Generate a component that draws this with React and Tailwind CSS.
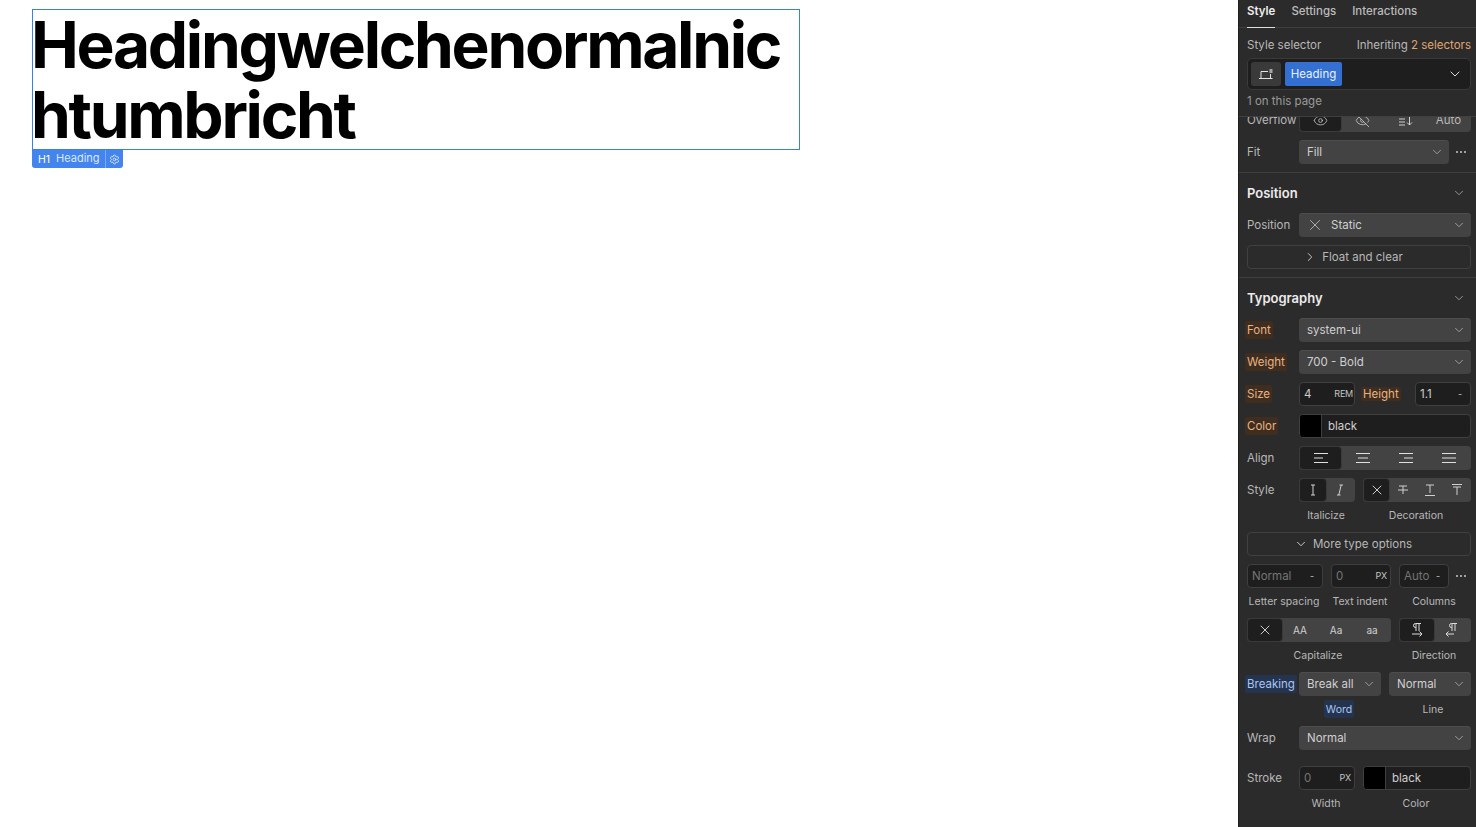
import React from 'react';
import { ChevronDown, ChevronRight, X, Eye, EyeOff, Settings } from 'lucide-react';

const Chevron = () => <ChevronDown size={14} strokeWidth={1.25} className="text-[#bdbdbd] shrink-0" />;

const Dots = () => (
  <svg width="12" height="12" viewBox="0 0 12 12" className="text-[#c8c8c8] shrink-0" fill="currentColor">
    <circle cx="2" cy="6" r="1" /><circle cx="6" cy="6" r="1" /><circle cx="10" cy="6" r="1" />
  </svg>
);

const Lines = ({ rows }) => (
  <svg width="16" height="12" viewBox="0 0 16 12" stroke="#e0e0e0" strokeWidth="1" fill="none">
    {rows.map(([a, b], i) => <path key={i} d={`M${a} ${1.5 + i * 4.5}H${b}`} />)}
  </svg>
);

const Label = ({ children, tone }) => {
  if (tone === 'orange') {
    return <span className="-ml-[2px] px-[2px] h-[18px] leading-[18px] rounded-[2px] bg-[#3f2e20] text-[#e8b383] w-fit">{children}</span>;
  }
  if (tone === 'blue') {
    return <span className="-ml-[2px] px-[2px] h-[18px] leading-[18px] rounded-[2px] bg-[#24344e] text-[#a8c6f5] w-fit">{children}</span>;
  }
  return <span className="text-[#b8b8b8]">{children}</span>;
};

const Select = ({ value, className = '', icon }) => (
  <div className={`h-[24px] rounded-[4px] bg-[#434343] shadow-[inset_0_1px_0_#4d4d4d] flex items-center justify-between pl-2 pr-[5px] text-[#d0d0d0] ${className}`}>
    <span className="flex items-center">{icon}{value}</span>
    <Chevron />
  </div>
);

const Field = ({ value, unit, className = '', dim }) => (
  <div className={`h-[24px] rounded-[4px] bg-[#1e1e1e] border border-[#3f3f3f] flex items-center justify-between pl-1 ${className}`}>
    <span className={dim ? 'text-[#757575]' : 'text-[#d0d0d0]'}>{value}</span>
    <span className="text-[9px] text-[#c4c4c4] tracking-tight">{unit}</span>
  </div>
);

const Swatch = ({ className = '' }) => (
  <div className={`h-[24px] rounded-[4px] bg-[#1e1e1e] border border-[#3f3f3f] flex items-center overflow-hidden text-[#d0d0d0] ${className}`}>
    <span className="w-[22px] h-full bg-black border-r border-[#3f3f3f]" />
    <span className="ml-[6px]">black</span>
  </div>
);

const Seg = ({ items, className = '' }) => (
  <div className={`h-[24px] rounded-[4px] bg-[#434343] flex items-stretch overflow-hidden ${className}`}>
    {items.map((item, i) => (
      <span
        key={i}
        className={`flex-1 flex items-center justify-center text-[10px] ${i === 0 ? 'bg-[#1e1e1e] rounded-[4px] border border-[#3a3a3a]' : 'pr-[2px]'} text-[#d0d0d0]`}
      >
        {item}
      </span>
    ))}
  </div>
);

const Row = ({ label, tone, children, className = '' }) => (
  <div className={`flex items-center h-[24px] ${className}`}>
    <div className="w-[52px] shrink-0 flex"><Label tone={tone}>{label}</Label></div>
    <div className="flex-1 flex items-center min-w-0">{children}</div>
  </div>
);

const Caption = ({ children, className = '' }) => (
  <span className={`text-center text-[10.5px] leading-[16px] pr-[2px] text-[#b8b8b8] ${className}`}>{children}</span>
);

const Outline = ({ children }) => (
  <div className="h-[24px] rounded-[4px] border border-[#404040] flex items-center justify-center gap-[5px] pr-[12px] text-[#b8b8b8]">
    {children}
  </div>
);

const SectionTitle = ({ children }) => (
  <div className="flex items-center justify-between h-[20px] pr-[5px]">
    <span className="text-[13px] leading-[20px] font-semibold text-[#ececec]">{children}</span>
    <Chevron />
  </div>
);

const XIcon = () => <X size={16} strokeWidth={1.25} className="text-[#eeeeee]" />;

const StrikeT = ({ d }) => (
  <svg width="14" height="14" viewBox="0 0 14 14" stroke="#d0d0d0" strokeWidth="1" fill="none"><path d={d} /></svg>
);

const Para = ({ d }) => (
  <svg width="16" height="16" viewBox="0 0 16 16" stroke="#dcdcdc" strokeWidth="1" fill="none"><path d={d} /></svg>
);

export default function App() {
  return (
    <div className="flex h-[827px] overflow-hidden bg-white" style={{ fontFamily: 'Inter, sans-serif' }}>
      <main className="flex-1 min-w-0 pt-[9px] pl-[32px]">
        <div className="relative w-[768px] h-[141px] border border-[#3b7de9]">
          <h1 className="text-[64px] leading-[70.4px] font-bold text-black break-all tracking-[-2.3px] -ml-[2px]">
            Headingwelchenormalnichtumbricht
          </h1>
          <div className="absolute -left-px top-[140px] flex items-center h-[18px] bg-[#4384ee] rounded-b-[3px] text-white text-[11px]">
            <span className="pl-[6px] pr-[6px] pt-[2px] text-[10.5px]">H1</span>
            <span className="pr-[5px] pb-[2px] text-[#dce8fc]">Heading</span>
            <span className="h-full border-l border-[#7fabf3] px-[3px] flex items-center">
              <Settings size={11} strokeWidth={1.5} />
            </span>
          </div>
        </div>
      </main>

      <aside className="w-[238px] shrink-0 bg-[#2b2b2b] border-l border-[#1f1f1f] text-[11.5px] leading-[16px] flex flex-col">
        <div className="h-[28px] border-b border-[#3f3f3f] flex items-start gap-4 px-2 text-[#bcbcbc]">
          <span className="h-[28px] pt-[3px] border-b border-[#dddddd] font-semibold text-[#eeeeee]">Style</span>
          <span className="pt-[3px] font-medium">Settings</span>
          <span className="pt-[3px] font-medium">Interactions</span>
        </div>

        <div className="h-[89px] border-b border-[#3f3f3f] pl-2 pr-[5px] pt-[10px]">
          <div className="flex justify-between text-[#b8b8b8] h-[14px] leading-[14px]">
            <span>Style selector</span>
            <span>Inheriting <span className="text-[#e0a56f]">2 selectors</span></span>
          </div>
          <div className="mt-[6px] h-[32px] rounded-[5px] bg-[#1e1e1e] border border-[#3a3a3a] flex items-center pl-[3px] pr-[7px] gap-1">
            <span className="w-[30px] h-[24px] rounded-[3px] bg-[#3a3a3a] flex items-center justify-center">
              <svg width="16" height="12" viewBox="0 0 16 12" stroke="#e4e4e4" strokeWidth="1" fill="none">
                <path d="M1 10.5H14.5M3 10.5V3.5H10M12.5 6V10.5" />
                <path d="M13 1V5M11.2 2H14.8M11.2 4H14.8" strokeWidth="0.8" />
              </svg>
            </span>
            <span className="h-[24px] w-[57px] justify-center rounded-[2px] bg-[#3370d1] text-[#e8f0ff] flex items-center">Heading</span>
            <ChevronDown size={16} strokeWidth={1.5} className="ml-auto text-[#dddddd]" />
          </div>
          <div className="mt-[3px] text-[#9a9a9a]">1 on this page</div>
        </div>

        <div className="flex-1 min-h-0 flex flex-col pl-2 pr-[5px]">
          <div className="h-[15px] overflow-hidden flex items-end shrink-0">
            <div className="flex items-center h-[24px] w-full shrink-0">
              <span className="w-[52px] shrink-0 text-[#b8b8b8]">Overflow</span>
              <Seg
                className="flex-1"
                items={[
                  <Eye size={15} strokeWidth={1.25} />,
                  <EyeOff size={15} strokeWidth={1.25} />,
                  <svg width="16" height="12" viewBox="0 0 16 12" stroke="#d0d0d0" fill="none">
                    <path d="M1 2H7M1 5H7M1 8H7M1 11H7" />
                    <path d="M11.5 1V11M9 8.5L11.5 11L14 8.5" />
                  </svg>,
                  <span className="text-[11.5px] text-[#b8b8b8]">Auto</span>,
                ]}
              />
            </div>
          </div>

          <Row label="Fit" className="mt-[8px]">
            <Select value="Fill" className="flex-1" />
            <span className="ml-[6px] mr-[4px]"><Dots /></span>
          </Row>

          <div className="-ml-2 -mr-[5px] mt-2 border-t border-[#3f3f3f]" />

          <div className="mt-[10px]"><SectionTitle>Position</SectionTitle></div>
          <Row label="Position" className="mt-[10px]">
            <Select
              value="Static"
              className="flex-1"
              icon={<X size={18} strokeWidth={1} className="-ml-[1px] mr-[7px] text-[#cccccc]" />}
            />
          </Row>
          <div className="mt-2">
            <Outline><ChevronRight size={14} strokeWidth={1.5} className="text-[#dddddd]" />Float and clear</Outline>
          </div>

          <div className="-ml-2 -mr-[5px] mt-2 border-t border-[#3f3f3f]" />

          <div className="mt-[10px]"><SectionTitle>Typography</SectionTitle></div>
          <Row label="Font" tone="orange" className="mt-[10px]">
            <Select value="system-ui" className="flex-1" />
          </Row>
          <Row label="Weight" tone="orange" className="mt-2">
            <Select value="700 - Bold" className="flex-1" />
          </Row>
          <Row label="Size" tone="orange" className="mt-2">
            <Field value="4" unit="REM" className="w-[56px] pr-[1px]" />
            <span className="ml-2 w-[52px]"><Label tone="orange">Height</Label></span>
            <Field value="1.1" unit="-" className="flex-1 pr-2" />
          </Row>
          <Row label="Color" tone="orange" className="mt-2">
            <Swatch className="flex-1" />
          </Row>
          <Row label="Align" className="mt-2">
            <Seg
              className="flex-1"
              items={[
                <Lines rows={[[1, 15], [1, 10], [1, 15]]} />,
                <Lines rows={[[1, 15], [3, 13], [1, 15]]} />,
                <Lines rows={[[1, 15], [6, 15], [1, 15]]} />,
                <Lines rows={[[1, 15], [1, 15], [1, 15]]} />,
              ]}
            />
          </Row>
          <Row label="Style" className="mt-2">
            <Seg
              className="w-[56px]"
              items={[
                <StrikeT d="M5 2H9M5 12H9M7 2V12" />,
                <StrikeT d="M6.5 2H10M4 12H7.5M8.2 2L5.8 12" />,
              ]}
            />
            <Seg
              className="flex-1 ml-2"
              items={[
                <XIcon />,
                <StrikeT d="M3 3H11M7 3V11M2 7H12" />,
                <StrikeT d="M3 2H11M7 2V10M2 12.5H12" />,
                <StrikeT d="M2 1.5H12M3 4H11M7 4V12" />,
              ]}
            />
          </Row>
          <div className="flex h-[14px] mt-[6px]">
            <span className="w-[52px] shrink-0" />
            <Caption className="w-[56px]">Italicize</Caption>
            <Caption className="flex-1 ml-2">Decoration</Caption>
          </div>

          <div className="mt-[10px]">
            <Outline><ChevronDown size={14} strokeWidth={1.5} className="text-[#dddddd]" />More type options</Outline>
          </div>

          <div className="flex items-center gap-2 mt-2">
            <Field value="Normal" unit="-" dim className="w-[76px] pr-2" />
            <Field value="0" unit="PX" dim className="w-[60px] pr-[3px]" />
            <Field value="Auto" unit="-" dim className="w-[50px] pr-2" />
            <span className="-ml-[2px]"><Dots /></span>
          </div>
          <div className="flex gap-2 h-[14px] mt-[6px] pr-[22px] whitespace-nowrap">
            <Caption className="w-[76px]">Letter spacing</Caption>
            <Caption className="w-[60px]">Text indent</Caption>
            <Caption className="w-[50px] translate-x-[11px]">Columns</Caption>
          </div>

          <div className="flex gap-2 mt-[10px]">
            <Seg
              className="w-[144px]"
              items={[<XIcon />, 'AA', 'Aa', 'aa']}
            />
            <Seg
              className="flex-1"
              items={[
                <Para d="M7 9V1.5M10 9V1.5M12 1.5H6.5A2 2 0 0 0 6.5 5.5H7M3 12H13M10.5 9.5L13 12L10.5 14.5" />,
                <Para d="M8 9V1.5M11 9V1.5M13 1.5H7.5A2 2 0 0 0 7.5 5.5H8M2 12H10M4.5 9.5L2 12L4.5 14.5" />,
              ]}
            />
          </div>
          <div className="flex gap-2 h-[14px] mt-[6px]">
            <Caption className="w-[144px]">Capitalize</Caption>
            <Caption className="flex-1">Direction</Caption>
          </div>

          <Row label="Breaking" tone="blue" className="mt-[10px]">
            <Select value="Break all" className="w-[82px]" />
            <Select value="Normal" className="flex-1 ml-2" />
          </Row>
          <div className="flex h-[18px] mt-[4px]">
            <span className="w-[52px] shrink-0" />
            <div className="w-[80px] flex justify-center"><span className="text-[10.5px] leading-[16px] pt-[2px] px-[2px] rounded-[2px] bg-[#24344e] text-[#a8c6f5]">Word</span></div>
            <span className="flex-1 ml-[10px] pl-[6px] pt-[2px] text-center text-[10.5px] leading-[16px] text-[#b8b8b8]">Line</span>
          </div>

          <Row label="Wrap" className="mt-[8px]">
            <Select value="Normal" className="flex-1" />
          </Row>

          <Row label="Stroke" className="mt-[16px]">
            <Field value="0" unit="PX" dim className="w-[56px] pr-[3px]" />
            <Swatch className="flex-1 ml-2" />
          </Row>
          <div className="flex h-[14px] mt-[6px]">
            <span className="w-[52px] shrink-0" />
            <Caption className="w-[56px]">Width</Caption>
            <Caption className="flex-1 ml-2">Color</Caption>
          </div>
        </div>
      </aside>
    </div>
  );
}
